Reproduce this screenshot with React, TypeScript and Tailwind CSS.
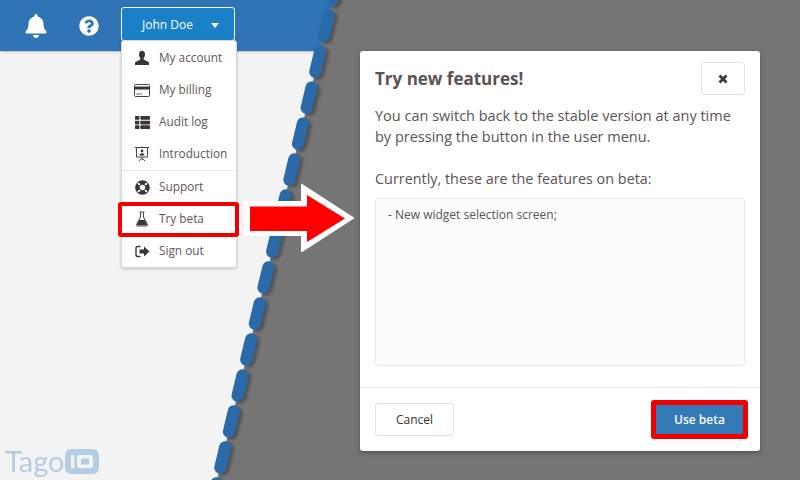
import React from "react";
import { FaBell, FaQuestionCircle, FaThList, FaLifeRing } from "react-icons/fa";

const F = "font-['Open_Sans',sans-serif]";

function UserIcon() {
  return (
    <svg width="16" height="16" viewBox="0 0 16 16" fill="#3b3336">
      <path d="M5 4.200C5 2 6.200.8 8 .8s3 1.200 3 3.400c0 1.800-.8 3.400-1.400 4.200v1.200l4 1.800c.9.4 1.400 1 1.400 1.800V15H1v-1.800c0-.8.5-1.400 1.400-1.800l4-1.800V8.400C5.800 7.600 5 6 5 4.200z" />
    </svg>
  );
}
function CardIcon() {
  return (
    <svg width="16" height="13" viewBox="0 0 16 13" fill="none">
      <rect x=".5" y=".5" width="15" height="12" rx="1" stroke="#4a4145" />
      <rect x="1" y="2.500" width="14" height="3" fill="#3b3336" />
      <path d="M2.500 10h3M6.500 10h1.500" stroke="#4a4145" />
    </svg>
  );
}
function IntroIcon() {
  return (
    <svg width="16" height="16" viewBox="0 0 16 16" fill="none" stroke="#4a4145">
      <path d="M1 1.500h14M2.500 1.500v9.500h11V1.500M8 .5v1M8 11v2M5 15l2-2h2l2 2" />
      <circle cx="8" cy="5" r="1.400" fill="#3b3336" stroke="none" />
      <path d="M5.500 9.500c0-1.500 1-2.300 2.500-2.300s2.500.8 2.500 2.300z" fill="#3b3336" stroke="none" />
    </svg>
  );
}
function FlaskIcon() {
  return (
    <svg width="14" height="16" viewBox="0 0 14 16" fill="none">
      <path d="M4.500 1h5M5.500 1v5L1.500 13.500c-.4.8 0 1.500.9 1.500h9.200c.9 0 1.300-.7.9-1.500L8.500 6V1" stroke="#4a4145" />
      <path d="M4.300 9h5.400l2.500 5.200H1.800z" fill="#3b3336" />
    </svg>
  );
}
function SignOutIcon() {
  return (
    <svg width="15" height="13" viewBox="0 0 15 13" fill="none">
      <path d="M5.500 1.500H2.500a1.500 1.500 0 0 0-1.500 1.500v7a1.500 1.500 0 0 0 1.500 1.500h3" stroke="#3b3336" strokeWidth="1.400" />
      <path d="M4.500 4.500h4.500V1.500l5.500 5-5.500 5V8.500H4.500z" fill="#3b3336" />
    </svg>
  );
}
function CloseIcon() {
  return (
    <svg width="10" height="10" viewBox="0 0 10 10" fill="none">
      <path d="M1.500 1.500l7 7M8.500 1.500l-7 7" stroke="#3a3a3a" strokeWidth="2.800" />
    </svg>
  );
}

function Item({ icon, label }: { icon: React.ReactNode; label: string }) {
  return (
    <div className="flex items-center h-8 pl-[12px] text-[11.800px] text-[#5f5459]">
      <span className="w-[16px] flex justify-center items-center text-[#3b3336]">{icon}</span>
      <span className="ml-[9px] whitespace-nowrap">{label}</span>
    </div>
  );
}

function Diagonal() {
  const line = "M339.200 -28 L200 552";
  return (
    <svg className="absolute inset-0" width="800" height="480" viewBox="0 0 800 480">
      <defs>
        <filter id="b" x="-20%" y="-20%" width="140%" height="140%">
          <feGaussianBlur stdDeviation="1.500" />
        </filter>
      </defs>
      <path d="M332.500 0 L800 0 L800 480 L217 480 Z" fill="#757575" />
      <path d={line} stroke="#000" strokeOpacity=".3" strokeWidth="12" strokeLinecap="round" strokeDasharray="21 16" strokeDashoffset="-7.700" fill="none" transform="translate(3 2)" filter="url(#b)" />
      <path d={line} stroke="#2a6aa8" strokeWidth="12" strokeLinecap="round" strokeDasharray="21 16" strokeDashoffset="-7.700" fill="none" />
    </svg>
  );
}

function Arrow() {
  return (
    <svg className="absolute left-[240px] top-[180px]" width="120" height="80" viewBox="240 180 120 80">
      <path d="M245 202 H302 V185 L353 218 L302 251 V235 H245 Z" fill="#fff" stroke="#fff" strokeWidth="2" strokeLinejoin="round" />
      <path d="M250 206.500 H307 V195 L345 218.500 L307 242 V231 H250 Z" fill="#ff0000" />
    </svg>
  );
}

export default function App() {
  return (
    <div className={"relative w-[800px] h-[480px] overflow-hidden bg-[#f3f3f3] " + F}>
      <header className="h-[51px] bg-[#2f74b5] shadow-[0_1px_2px_rgba(0,0,0,.25)] flex items-center pl-[24px]">
        <FaBell className="text-white" size={24} />
        <FaQuestionCircle className="text-white ml-[31px]" size={20} />
        <button className="ml-[22px] mt-[-3px] w-[114px] h-[34px] rounded-[3px] border border-white bg-[#1a81c9] text-white text-[12px] flex items-center pl-[20px] pt-[2px]">
          <span>John Doe</span>
          <svg width="8" height="5" viewBox="0 0 8 5" className="ml-[18px]">
            <path d="M0 0h8L4 5z" fill="#fff" />
          </svg>
        </button>
      </header>

      <Diagonal />

      <div className="absolute left-[121px] top-[40px] w-[116px] bg-white rounded-[3px] border border-[#d8d8d8] shadow-[0_1px_3px_rgba(0,0,0,.2)] pt-[1px]">
        <Item icon={<UserIcon />} label="My account" />
        <Item icon={<CardIcon />} label="My billing" />
        <Item icon={<FaThList size={15} />} label="Audit log" />
        <Item icon={<IntroIcon />} label="Introduction" />
        <div className="h-px bg-[#e5e5e5]" />
        <Item icon={<FaLifeRing size={15} />} label="Support" />
        <Item icon={<FlaskIcon />} label="Try beta" />
        <Item icon={<SignOutIcon />} label="Sign out" />
      </div>
      <div className="absolute left-[118px] top-[202px] w-[121px] h-[35px] border-[4px] border-[#f00000] rounded-[3px]" />

      <Arrow />

      <div className="absolute left-[360px] top-[51px] w-[400px] h-[400px] bg-white rounded-[3px] shadow-[0_2px_4px_rgba(0,0,0,.3)] flex flex-col text-[#5a5256]">
        <div className="flex-1 px-[15px] pt-[10px] min-h-0 flex flex-col">
          <div className="flex items-start justify-between">
            <h2 className="text-[17px] font-bold leading-[36px]">Try new features!</h2>
            <button className="w-[44px] h-[33px] rounded-[3px] border border-[#e0e0e0] flex items-center justify-center mt-[1px]">
              <CloseIcon />
            </button>
          </div>
          <p className="text-[14.500px] leading-[21px] mt-[8px]">You can switch back to the stable version at any time by pressing the button in the user menu.</p>
          <p className="text-[14.400px] leading-[21px] mt-[21px]">Currently, these are the features on beta:</p>
          <div className="mt-[9px] h-[168px] rounded-[3px] border border-[#e8e8e8] bg-[#fcfcfc] px-[12px] pt-[7px] text-[12px] leading-[18px] text-[#555]">- New widget selection screen;</div>
        </div>
        <div className="h-[64px] border-t border-[#e3e3e3] px-[15px] flex items-center justify-between">
          <button className="w-[79px] h-[33px] rounded-[3px] border border-[#e0e0e0] text-[12px] text-[#333]">Cancel</button>
          <button className="w-[97px] h-[39px] rounded-[3px] border-[5px] border-[#f00000] bg-[#337ab7] text-white text-[12px] font-semibold mr-[-3px]">Use beta</button>
        </div>
      </div>

      <div className="absolute left-[5px] top-[447px] flex items-center blur-[0.4px]">
        <span className="text-[29px] leading-[28px] text-[#b4cde3] font-['Lato',sans-serif]">Tago</span>
        <svg width="34" height="25" viewBox="0 0 34 25">
          <rect width="34" height="25" rx="6" fill="#b4cde3" />
          <rect x="6" y="6" width="3.500" height="13" fill="#f3f3f3" />
          <rect x="12" y="6" width="16" height="13" rx="3" fill="#f3f3f3" />
          <rect x="16" y="9.500" width="8" height="6" rx="1" fill="#b4cde3" />
        </svg>
      </div>
    </div>
  );
}
